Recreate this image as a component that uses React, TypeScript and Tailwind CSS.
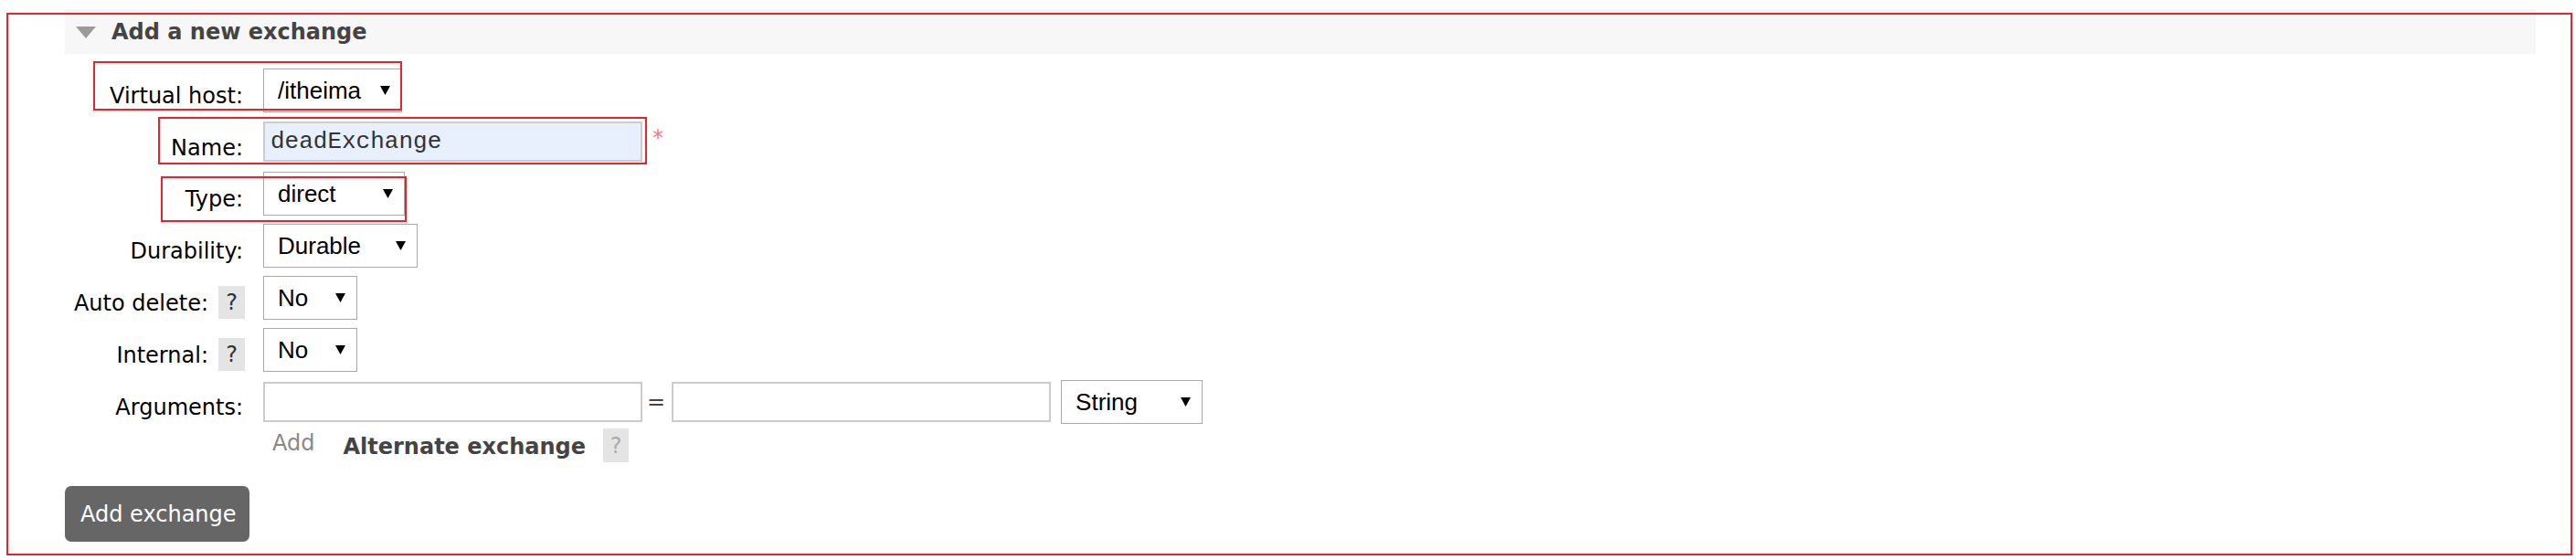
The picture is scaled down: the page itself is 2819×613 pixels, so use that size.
import React from 'react';

const sans = "font-['DejaVu_Sans',Verdana,sans-serif]";
const mono = "font-['Liberation_Mono','Courier_New',monospace]";

function Arrow() {
  return (
    <svg width="11" height="10" viewBox="0 0 11 10" className="shrink-0">
      <polygon points="0,0 11,0 5.5,10" fill="#000" />
    </svg>
  );
}

function FakeSelect({ value, width }: { value: string; width: string }) {
  return (
    <div className={`${width} h-[48px] border border-[#a9a9a9] bg-white flex items-center justify-between pl-[15px] pr-[12px]`}>
      <span className="[font-family:'Liberation_Sans',Arial,sans-serif] text-[26px] leading-[30px] text-black">{value}</span>
      <Arrow />
    </div>
  );
}

function Help({ faded }: { faded?: boolean }) {
  return (
    <span
      className={`w-[29px] h-[36px] bg-[#e4e4e4] flex items-center justify-center text-[24px] ${
        faded ? 'text-[#aaa]' : 'text-[#333]'
      }`}
    >
      ?
    </span>
  );
}

function Row({
  label,
  help,
  pt = 'pt-[16px]',
  mt,
  children,
}: {
  label: string;
  help?: boolean;
  pt?: string;
  mt: string;
  children: React.ReactNode;
}) {
  return (
    <div className={`flex items-start ${mt}`}>
      <div className="w-[197px] flex justify-end items-start">
        <span className={`${pt} leading-[28px] text-[24px] text-black ${help ? '' : 'pr-[2px]'}`}>{label}</span>
        {help && (
          <span className="ml-[11px] mt-[11px]">
            <Help />
          </span>
        )}
      </div>
      <div className="ml-[20px] flex items-center">{children}</div>
    </div>
  );
}

export default function App() {
  return (
    <div className={`relative w-[2819px] h-[613px] bg-white ${sans}`}>
      <div className="pt-[10px] pl-[71px] pr-[44px]">
        <div className="h-[49px] bg-[#f7f7f7] flex items-center pl-[12px]">
          <svg width="22" height="13" viewBox="0 0 22 13" className="mt-[2px]">
            <polygon points="0,0 22,0 11,13" fill="#9b9b9b" />
          </svg>
          <h2 className="ml-[17px] text-[24px] font-bold text-[#444] leading-[28px]">Add a new exchange</h2>
        </div>

        <Row label="Virtual host:" mt="mt-[16px]">
          <FakeSelect value="/itheima" width="w-[152px]" />
        </Row>

        <Row label="Name:" mt="mt-[10px]" pt="pt-[15px]">
          <div className="w-[415px] h-[44px] border-2 border-[#ccc] bg-[#e8f0fe] flex items-center pl-[6px]">
            <span className={`${mono} text-[26px] text-[#333]`}>deadExchange</span>
          </div>
          <span className="self-start ml-[11px] mt-[4px] leading-[28px] text-[24px] text-[#f77]">*</span>
        </Row>

        <Row label="Type:" mt="mt-[11px]">
          <FakeSelect value="direct" width="w-[155px]" />
        </Row>

        <Row label="Durability:" mt="mt-[9px]">
          <FakeSelect value="Durable" width="w-[169px]" />
        </Row>

        <Row label="Auto delete:" help mt="mt-[9px]">
          <FakeSelect value="No" width="w-[103px]" />
        </Row>

        <Row label="Internal:" help mt="mt-[9px]">
          <FakeSelect value="No" width="w-[103px]" />
        </Row>

        <Row label="Arguments:" mt="mt-[9px]">
          <div className="w-[415px] h-[44px] border-2 border-[#ccc] bg-white" />
          <span className="ml-[5px] mr-[7px] text-[24px] text-[#444] leading-[28px]">=</span>
          <div className="w-[415px] h-[44px] border-2 border-[#ccc] bg-white" />
          <div className="ml-[11px]">
            <FakeSelect value="String" width="w-[155px]" />
          </div>
        </Row>

        <div className="flex items-start mt-[5px] pl-[227px] text-[24px] leading-[28px]">
          <span className="pt-[2px] text-[#888]">Add</span>
          <span className="ml-[31px] pt-[6px] font-bold text-[#444]">Alternate exchange</span>
          <span className="ml-[19px]">
            <span className="w-[28px] h-[37px] bg-[#e4e4e4] flex items-center justify-center text-[#aaa]">?</span>
          </span>
        </div>

        <button className="mt-[26px] w-[202px] h-[61px] rounded-[7px] bg-[#666] text-white text-[24px] leading-[28px] flex items-center pl-[17px]">
          Add exchange
        </button>
      </div>

      {/* red annotation boxes drawn over the form */}
      <div className="absolute left-[7px] top-[14px] w-[2808px] h-[594px] border-2 border-[#e8232b] pointer-events-none" />
      <div className="absolute left-[102px] top-[67px] w-[338px] h-[54px] border-2 border-[#e8232b] pointer-events-none" />
      <div className="absolute left-[173px] top-[128px] w-[535px] h-[52px] border-2 border-[#e8232b] pointer-events-none" />
      <div className="absolute left-[176px] top-[193px] w-[269px] h-[50px] border-2 border-[#e8232b] pointer-events-none" />
    </div>
  );
}
